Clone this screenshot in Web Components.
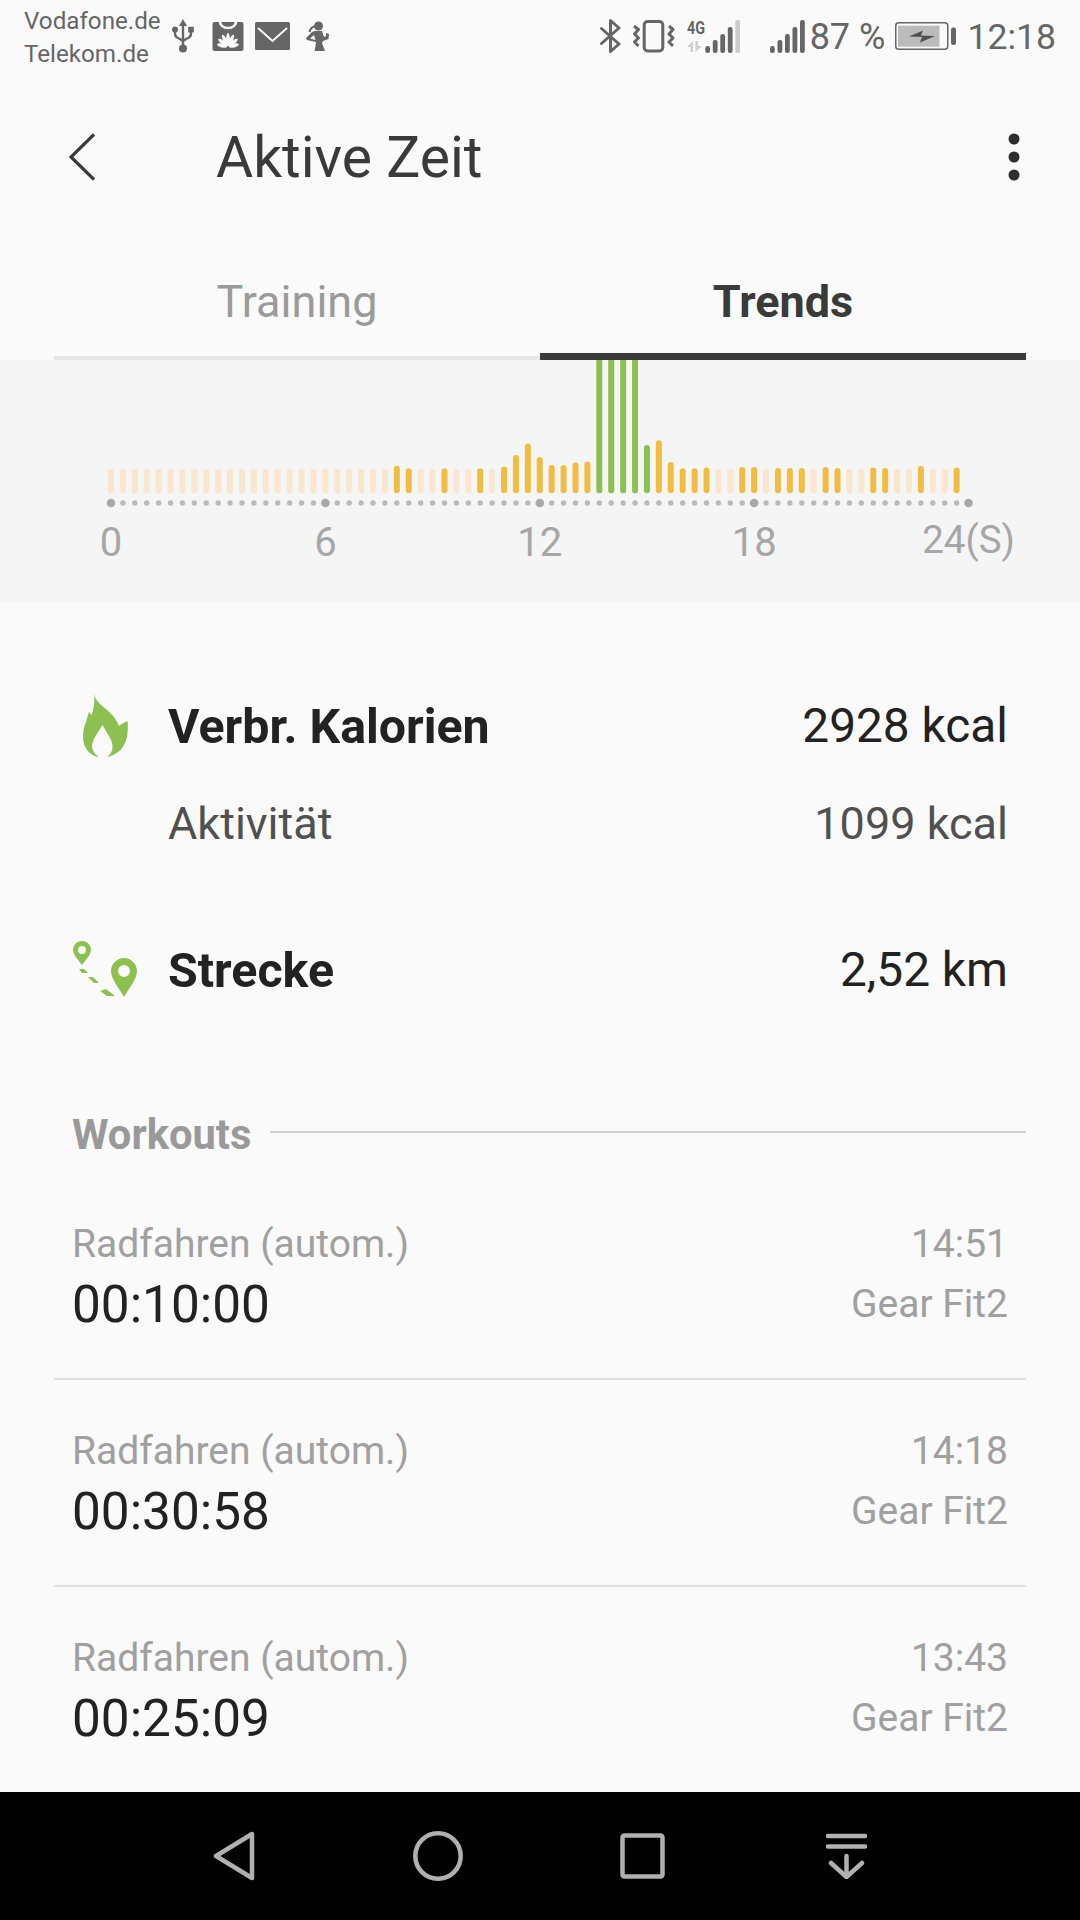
<!DOCTYPE html>
<html lang="de"><head><meta charset="utf-8"><title>Aktive Zeit</title>
<style>
html,body{margin:0;padding:0;background:#fafafa}
body{font-family:Roboto,"Liberation Sans",sans-serif;width:1080px;height:1920px;overflow:hidden}
</style></head><body>
<app-screen>
  <status-bar></status-bar>
  <app-header>Aktive Zeit</app-header>
  <tab-bar></tab-bar>
  <day-chart></day-chart>
  <stats-panel>
    <stat-row strong><svg slot="icon" style="margin-left:13px" width="45" height="64" viewBox="0 0 45 64"><path fill="#8cc152" d="M11 0C13 10 24 14 30 22C33 26 35 29 36 32C38 30 42 28 44.700 27C45 36 45 44 41 51C38 57 32 61 24 63C29 59 31 55 28.500 47C26 41 22 36 19.500 31C16 37 11 43 9.500 49C8 55 11 60 16 63C8 62 3 56 1 50C-1 43 0 35 3 28C4 24 5 21 6 18C7 19 8 20 8.500 21C11 15 12 7 11 0Z"/></svg><span slot="label">Verbr. Kalorien</span><span slot="value">2928 kcal</span></stat-row>
    <stat-row class="tight"><span slot="label">Aktivität</span><span slot="value">1099 kcal</span></stat-row>
    <stat-row strong class="gap"><svg slot="icon" style="margin-left:3px" width="66" height="58" viewBox="0 0 66 58"><g fill="#8cc152"><path fill-rule="evenodd" d="M9 0C14 0 18 4 18 9C18 13 13 19 9 24C5 19 0 13 0 9C0 4 4 0 9 0ZM9 5A4 4 0 1 0 9 13A4 4 0 1 0 9 5Z"/><path fill-rule="evenodd" d="M51 17C58 17 64 23 64 30C64 38 56 47 51 56C46 47 38 38 38 30C38 23 44 17 51 17ZM51 24A6 6 0 1 0 51 36A6 6 0 1 0 51 24Z"/><path d="M6 28L11 28L15 32L9 32Z"/><path d="M15 36L20 36L26 42L21 42Z"/><path d="M27 50L33 48L42 55L34 55Z"/></g></svg><span slot="label">Strecke</span><span slot="value">2,52 km</span></stat-row>
    <section-heading>Workouts</section-heading>
    <workout-row><span slot="name">Radfahren (autom.)</span><span slot="time">14:51</span><span slot="duration">00:10:00</span><span slot="device">Gear Fit2</span></workout-row>
    <workout-row><span slot="name">Radfahren (autom.)</span><span slot="time">14:18</span><span slot="duration">00:30:58</span><span slot="device">Gear Fit2</span></workout-row>
    <workout-row last><span slot="name">Radfahren (autom.)</span><span slot="time">13:43</span><span slot="duration">00:25:09</span><span slot="device">Gear Fit2</span></workout-row>
  </stats-panel>
  <nav-bar></nav-bar>
</app-screen>
<script>
function def(name, css, html, after){
  customElements.define(name, class extends HTMLElement{
    connectedCallback(){
      if(this.shadowRoot) return;
      const r=this.attachShadow({mode:'open'});
      r.innerHTML='<style>'+css+'</style>'+html;
      if(after) after(r,this);
    }
  });
}
def('app-screen',':host{display:flex;flex-direction:column;width:1080px;height:1920px;background:#fafafa;overflow:hidden}','<slot></slot>');

const I='#666';
const signal=(last)=>[[0,45],[7.5,39],[15,33],[22.5,26],[30,19]].map((b,i)=>`<rect x="${b[0]}" y="${b[1]-19}" width="4.800" height="${52-b[1]}" rx="2.200" fill="${i==4&&last?last:I}"/>`).join('');
const petals=[[-76,10],[-50,11.500],[-25,12.500],[0,13],[25,12.500],[50,11.500],[76,10]].map(p=>`<ellipse cx="15.500" cy="${25-p[1]/2-1}" rx="1.900" ry="${p[1]/2}" transform="rotate(${p[0]} 15.500 25)" fill="#fafafa"/>`).join('');
def('status-bar',`
:host{display:flex;align-items:center;height:76px;flex:none;color:#666;box-sizing:border-box;padding:0 24px 4px 24px}
.car{font-size:24.200px;line-height:33px;width:135px;white-space:nowrap;margin-top:3px}
svg{display:block;flex:none}
.t{font-size:36px;line-height:40px;white-space:nowrap;margin-top:2px}
`,`
<div class="car">Vodafone.de<br>Telekom.de</div>
<svg style="margin-left:13px" width="22" height="34" viewBox="0 0 22 34"><path d="M11 4V28M3 11V14.500Q3 18 7 19.500L11 22M19 11V14.500Q19 18 15 19.500L11 22" fill="none" stroke="${I}" stroke-width="2.400"/><path d="M11 0L15 7H7Z" fill="${I}"/><circle cx="11" cy="29.500" r="4" fill="${I}"/><circle cx="3" cy="10.500" r="3" fill="${I}"/><rect x="16.200" y="7.800" width="5.600" height="5.600" fill="${I}"/></svg>
<svg style="margin-left:18px" width="32" height="29" viewBox="0 0 31 29"><rect width="31" height="29" rx="2" fill="${I}"/><path d="M7.500 0A8 6 0 0 0 23.500 0" fill="none" stroke="#fafafa" stroke-width="2.600"/>${petals}</svg>
<svg style="margin-left:11px" width="35" height="28" viewBox="0 0 35 28"><rect width="35" height="28" rx="1.500" fill="${I}"/><path d="M3 6L17.500 19L32 6" fill="none" stroke="#fafafa" stroke-width="2"/></svg>
<svg style="margin-left:16px" width="23" height="30" viewBox="0 0 23 30"><circle cx="12.500" cy="5" r="4.500" fill="${I}"/><path d="M9.500 5C6 6 4 8 3.500 11" fill="none" stroke="${I}" stroke-width="2"/><path fill="${I}" fill-rule="evenodd" d="M9 10H16L18 16L20 15L20 12L23 13L22.500 18L17 20L16 22L19 30H8.500L9.500 25L10 21L1 19L0 17L6 11ZM8 14L4 17.500L9.500 19Z"/></svg>
<svg style="margin-left:auto" width="21" height="34" viewBox="0 0 21 34"><path d="M1.500 9.500L19 25L10.500 32.500V1.500L19 9L1.500 24.500" fill="none" stroke="${I}" stroke-width="3" stroke-linejoin="round" stroke-linecap="round"/></svg>
<svg style="margin-left:12px" width="42" height="33" viewBox="0 0 42 33"><rect x="11.200" y="1.500" width="18.600" height="29.500" rx="3.500" fill="none" stroke="${I}" stroke-width="3"/><path d="M1 6L5.500 9.500L1.500 14L5.500 18L1.500 22L5.500 26M36 6L40 9.500L36 14L40 18L36 22L40 26" fill="none" stroke="${I}" stroke-width="3" stroke-linejoin="round"/></svg>
<svg style="margin-left:12px" width="53" height="45" viewBox="0 -6 53 45"><text x="0" y="13.500" font-family="Roboto" font-weight="700" font-size="18" textLength="18" lengthAdjust="spacingAndGlyphs" fill="${I}">4G</text><path d="M0 27L6 21V32H3.500V27ZM8.500 21H11V26H15L8.500 32Z" fill="#d0d0d0"/><g transform="translate(18.300 0)">${signal('#ccc')}</g></svg>
<svg style="margin-left:30px" width="35" height="33" viewBox="0 0 35 33">${signal()}</svg>
<div class="t" style="margin-left:5px">87 %</div>
<svg style="margin-left:10px" width="61" height="28" viewBox="0 0 61 28"><rect x=".75" y=".75" width="52" height="26.500" rx="3" fill="none" stroke="${I}" stroke-width="1.500"/><rect x="3" y="3.700" width="41.500" height="21" fill="#bbb"/><path d="M14 14.500L28 8.500L26 13.500L40 14L25 20.500L27 15Z" fill="#505050"/><rect x="56" y="5.500" width="5" height="17.500" rx="2" fill="${I}"/></svg>
<div class="t" style="margin-left:11px;font-size:35.600px">12:18</div>
`);

def('app-header',`
:host{display:flex;align-items:center;height:162px;flex:none;color:#3a3a3a;box-sizing:border-box;padding:0 60px 0 69px;font-size:57px}
.title{margin-left:121px;flex:1}
svg{display:block}
`,`<svg width="26" height="48" viewBox="0 0 26 48"><path d="M25 1.500L2 24L25 46.500" fill="none" stroke="#3a3a3a" stroke-width="3.200"/></svg><div class="title"><slot></slot></div>
<svg width="12" height="48" viewBox="0 0 12 48"><g fill="#2e2e2e"><circle cx="6" cy="6" r="5.500"/><circle cx="6" cy="24" r="5.500"/><circle cx="6" cy="42" r="5.500"/></g></svg>`);

def('tab-bar',`
:host{display:flex;height:122px;flex:none;padding:0 54px;font-size:45px}
div{flex:1;box-sizing:border-box;text-align:center;padding-top:39px;line-height:50px;color:#9a9a9a;border-bottom:4px solid #e6e6e6}
.on{color:#3a3a3a;font-weight:700;border-bottom:7px solid #3a3a3a}
`,`<div>Training</div><div class="on">Trends</div>`);

const H={24:27.5,25:25,28:25,31:25,33:26.7,34:38.3,35:49.7,36:36.3,37:28.3,38:28.3,39:30.7,40:31.7,45:48.3,46:53,47:31.3,48:25,49:25,50:25.7,53:26.3,54:26.3,56:25.3,57:25.3,58:25.3,60:26.3,61:25.3,64:25.7,65:25.3,68:27.3,71:25.7};
function chartSvg(){
  const x0=111,st=11.91,base=133.3;let s='';
  for(let i=0;i<72;i++){
    const x=x0+i*st-3;
    if(i>=41&&i<=44) s+=`<rect x="${x}" y="-6" width="6" height="${base+6}" rx="2.500" fill="#8cc152"/>`;
    else if(i==45) s+=`<rect x="${x}" y="${base-48.3}" width="6" height="48.300" rx="3" fill="#8cc152"/>`;
    else if(H[i]) s+=`<rect x="${x}" y="${base-H[i]}" width="6" height="${H[i]}" rx="3" fill="#f2bc42"/>`;
    else s+=`<rect x="${x}" y="${base-24.5}" width="6" height="24.500" rx="3" fill="#f8e6cf"/>`;
  }
  for(let i=0;i<=72;i++){
    const big=i%18==0,x=x0+i*st;
    s+=`<circle cx="${x}" cy="143" r="${big?4.300:2.700}" fill="${big?'#a8a8a8':'#bababa'}"/>`;
  }
  return `<svg width="1080" height="158" viewBox="0 0 1080 158">${s}</svg>`;
}
def('day-chart',`
:host{display:block;height:242px;flex:none;background:#f5f5f5;overflow:hidden}
svg{display:block}
.ax{display:flex;height:50px;font-size:40px;line-height:50px;color:#a6a6a6;padding-left:111px}
.ax span{width:214.400px;flex:none;display:flex;justify-content:center;transform:translateX(-107.200px);white-space:nowrap}
.ax span:last-child{font-size:38.500px;transform:translate(-107.200px,-3px)}
`,chartSvg()+`<div class="ax"><span>0</span><span>6</span><span>12</span><span>18</span><span>24(S)</span></div>`);

def('stats-panel',':host{display:block;flex:1;min-height:0;overflow:hidden;padding-top:75px}','<slot></slot>');

customElements.define('stat-row',class extends HTMLElement{
  connectedCallback(){
    if(this.shadowRoot)return;
    const r=this.attachShadow({mode:'open'});
    const strong=this.hasAttribute('strong');
    r.innerHTML=`<style>
:host{display:flex;align-items:center;height:98px;padding:0 72px 0 168px;position:relative;font-size:${strong?'47.800px':'45px'};color:${strong?'#222':'#505050'};}
:host(.gap){margin-top:49px}
:host(.tight){margin-top:-1px;margin-bottom:1px}
.ic{position:absolute;left:70px;top:0;bottom:0;width:98px;display:flex;align-items:center}
.l{flex:1;font-weight:${strong?700:400};font-size:${strong?'48.300px':'45px'}}
</style><div class="ic"><slot name="icon"></slot></div><div class="l"><slot name="label"></slot></div><div><slot name="value"></slot></div>`;
  }
});

def('section-heading',`
:host{display:flex;align-items:center;height:60px;margin-top:85px;padding:0 54px 0 72px;font-size:41.700px;font-weight:700;color:#999}
div{flex:1;height:2px;background:#d0d0d0;margin:-4px 0 0 19px}
`,`<slot></slot><div></div>`);

customElements.define('workout-row',class extends HTMLElement{
  connectedCallback(){
    if(this.shadowRoot)return;
    const r=this.attachShadow({mode:'open'});
    const last=this.hasAttribute('last');
    r.innerHTML=`<style>
:host{display:block;margin:0 54px;box-sizing:border-box;height:207px;padding:41px 18px 0 18px;${last?'':'border-bottom:2px solid #dfdfdf;'}}
:host(:first-of-type){margin-top:9px}
.r{display:flex;justify-content:space-between;align-items:center;height:60px;font-size:39px;color:#a0a0a0}
.d{font-size:51.300px;color:#222}
</style><div class="r"><slot name="name"></slot><slot name="time"></slot></div><div class="r"><span class="d"><slot name="duration"></slot></span><slot name="device"></slot></div>`;
  }
});

def('nav-bar',`
:host{display:flex;align-items:center;height:128px;flex:none;background:#000;padding-left:213px}
svg{display:block;flex:none}
`,`<svg width="42" height="50" viewBox="0 0 42 50"><path d="M39 3V47L3 25Z" fill="none" stroke="#b0b0b0" stroke-width="4.500" stroke-linejoin="round"/></svg>
<svg style="margin-left:158px" width="50" height="50" viewBox="0 0 50 50"><circle cx="25" cy="25" r="22.700" fill="none" stroke="#b0b0b0" stroke-width="4.500"/></svg>
<svg style="margin-left:157px" width="45" height="46" viewBox="0 0 45 46"><rect x="2.500" y="2.500" width="40" height="41" rx="2" fill="none" stroke="#b0b0b0" stroke-width="4.500"/></svg>
<svg style="margin-left:161px" width="41" height="46" viewBox="0 0 41 46"><path d="M2 3H39M2 13.500H39M20.500 23V43M5 30L20.500 44L36 30" fill="none" stroke="#b0b0b0" stroke-width="4.500" stroke-linecap="round" stroke-linejoin="round"/></svg>`);
</script>
</body></html>
